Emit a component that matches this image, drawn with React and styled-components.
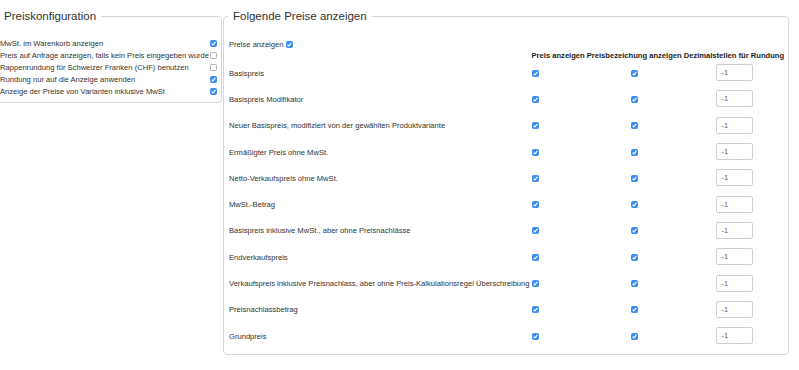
import React from 'react'
import styled, { createGlobalStyle } from 'styled-components'

const GlobalStyle = createGlobalStyle`
  html, body {
    margin: 0;
    padding: 0;
    background: #fff;
  }
  body {
    font-family: "Liberation Sans", Arial, sans-serif;
    color: #333;
  }
`

const Page = styled.div`
  display: flex;
  align-items: flex-start;
  gap: 1px;
  padding: 9px 10px 0 0;
  width: 799px;
  box-sizing: border-box;
  overflow: hidden;
`

const Box = styled.fieldset`
  margin: 0;
  border: 1px solid #d6d6d6;
  border-radius: 4px;
  min-width: 0;
  box-sizing: border-box;
`

const SideBox = styled(Box)`
  width: 230px;
  margin-left: -8px;
  padding: 13px 4px 5px 7px;
  flex-shrink: 0;
`

const MainBox = styled(Box)`
  flex: 1;
  padding: 8px 4px 3px 4px;
`

const Legend = styled.legend`
  font-size: 11.5px;
  color: #333;
  padding: 0 5px;
  margin-left: ${(p) => p.$offset || 0}px;
  line-height: 15px;
`

const OptionRow = styled.label`
  display: flex;
  align-items: center;
  justify-content: space-between;
  height: 12px;
  font-size: 7.6px;
  white-space: nowrap;
`

const Check = styled.span`
  display: inline-block;
  width: 7px;
  height: 7px;
  border-radius: 1.5px;
  box-sizing: border-box;
  flex-shrink: 0;
  background: ${(p) => (p.$on ? '#3c8ef3' : '#fff')};
  border: 1px solid ${(p) => (p.$on ? '#3c8ef3' : '#b5b5b5')};
  position: relative;
  svg {
    position: absolute;
    left: -1px;
    top: -1px;
  }
`

const Box7 = ({ on = true }) => (
  <Check $on={on}>
    {on && (
      <svg width="7" height="7" viewBox="0 0 7 7">
        <path d="M1.6 3.6 L2.9 4.9 L5.4 1.9" stroke="#fff" strokeWidth="1.1" fill="none" />
      </svg>
    )}
  </Check>
)

const TopLine = styled.div`
  display: flex;
  align-items: center;
  gap: 3px;
  font-size: 7.6px;
  height: 12px;
  padding-left: 1px;
  margin-top: 6px;
`

const Grid = styled.div`
  display: grid;
  grid-template-columns: 1fr auto auto auto;
  column-gap: 2px;
  padding-left: 1px;
`

const Head = styled.div`
  font-size: 7.6px;
  font-weight: bold;
  color: #222;
  white-space: nowrap;
  height: 12px;
  line-height: 12px;
`

const Cell = styled.div`
  height: 26.3px;
  display: flex;
  align-items: center;
  justify-content: ${(p) => p.$align || 'flex-start'};
  font-size: 7.6px;
  white-space: nowrap;
  padding-bottom: 4px;
  box-sizing: border-box;
`

const Num = styled.input`
  width: 37px;
  height: 17px;
  box-sizing: border-box;
  border: 1px solid #cfcfcf;
  border-radius: 2px;
  font-family: inherit;
  font-size: 7.6px;
  color: #666;
  padding: 0 4px;
  margin: 0 0 1px 2px;
  outline: none;
`

const options = [
  ['MwSt. im Warenkorb anzeigen', true],
  ['Preis auf Anfrage anzeigen, falls kein Preis eingegeben wurde', false],
  ['Rappenrundung für Schweizer Franken (CHF) benutzen', false],
  ['Rundung nur auf die Anzeige anwenden', true],
  ['Anzeige der Preise von Varianten inklusive MwSt', true],
]

const prices = [
  'Basispreis',
  'Basispreis Modifikator',
  'Neuer Basispreis, modifiziert von der gewählten Produktvariante',
  'Ermäßigter Preis ohne MwSt.',
  'Netto-Verkaufspreis ohne MwSt.',
  'MwSt.-Betrag',
  'Basispreis inklusive MwSt., aber ohne Preisnachlässe',
  'Endverkaufspreis',
  'Verkaufspreis inklusive Preisnachlass, aber ohne Preis-Kalkulationsregel Überschreibung',
  'Preisnachlassbetrag',
  'Grundpreis',
]

export default function App() {
  return (
    <>
      <GlobalStyle />
      <Page>
        <SideBox>
          <Legend $offset={-1}>Preiskonfiguration</Legend>
          {options.map(([text, on]) => (
            <OptionRow key={text}>
              {text}
              <Box7 on={on} />
            </OptionRow>
          ))}
        </SideBox>
        <MainBox>
          <Legend>Folgende Preise anzeigen</Legend>
          <TopLine>
            Preise anzeigen <Box7 />
          </TopLine>
          <Grid>
            <Head />
            <Head>Preis anzeigen</Head>
            <Head>Preisbezeichung anzeigen</Head>
            <Head>Dezimalstellen für Rundung</Head>
            {prices.map((p) => (
              <React.Fragment key={p}>
                <Cell>{p}</Cell>
                <Cell><Box7 /></Cell>
                <Cell $align="center"><Box7 /></Cell>
                <Cell $align="center"><Num defaultValue="-1" /></Cell>
              </React.Fragment>
            ))}
          </Grid>
        </MainBox>
      </Page>
    </>
  )
}
